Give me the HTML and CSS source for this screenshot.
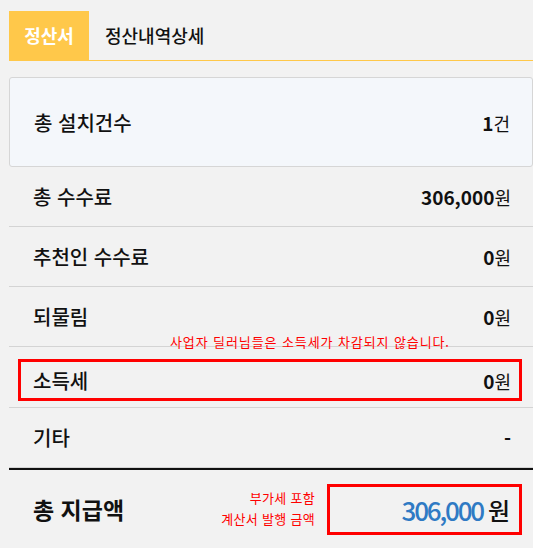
FILE: index.html
```html
<!DOCTYPE html>
<html lang="ko">
<head>
<meta charset="UTF-8">
<meta name="viewport" content="width=device-width, initial-scale=1.0">
<title>정산서</title>
<link rel="stylesheet" href="styles.css">
</head>
<body>
<div class="wrap">
    <div class="tabs">
        <div class="tab active">정산서</div>
        <div class="tab">정산내역상세</div>
    </div>

    <div class="card">
        <span class="label">총 설치건수</span>
        <span class="value"><b>1</b>건</span>
    </div>

    <div class="row">
        <span class="label">총 수수료</span>
        <span class="value"><b>306,000</b>원</span>
    </div>
    <div class="row">
        <span class="label">추천인 수수료</span>
        <span class="value"><b>0</b>원</span>
    </div>
    <div class="row">
        <span class="label">되물림</span>
        <span class="value"><b>0</b>원</span>
    </div>
    <div class="row tax-row">
        <p class="tax-note">사업자 딜러님들은 소득세가 차감되지 않습니다.</p>
        <div class="tax-box">
            <span class="label">소득세</span>
            <span class="value"><b>0</b>원</span>
        </div>
    </div>
    <div class="row">
        <span class="label">기타</span>
        <span class="value"><b>-</b></span>
    </div>

    <div class="total">
        <span class="total-label">총 지급액</span>
        <div class="total-right">
            <p class="total-note">부가세 포함<br>계산서 발행 금액</p>
            <div class="total-box">
                <span class="total-num">306,000</span> 원
            </div>
        </div>
    </div>
</div>
</body>
</html>
```

FILE: styles.css
```css
body {
    margin: 0;
    padding: 0;
    background-color: #f2f2f2;
    font-family: "Noto Sans CJK KR", "Noto Sans", sans-serif;
    color: #111111;
}
.wrap {
    padding: 11px 0 0 9px;
}

/* tabs */
.tabs {
    display: flex;
    border-bottom: 1px solid #ffc84a;
}
.tab {
    height: 49px;
    line-height: 49px;
    padding: 0 16px;
    font-size: 18px;
    font-weight: 500;
}
.tab.active {
    width: 80px;
    box-sizing: border-box;
    text-align: center;
    padding: 0;
    background-color: #ffc84a;
    color: #ffffff;
    font-weight: 700;
}

/* summary card */
.card {
    display: flex;
    justify-content: space-between;
    align-items: center;
    margin-top: 16px;
    height: 90px;
    box-sizing: border-box;
    padding: 0 22px 0 24px;
    background-color: #f4f7fb;
    border: 1px solid #d6d6d6;
    border-radius: 3px;
}

.label {
    font-size: 20px;
    font-weight: 500;
}
.value {
    font-size: 18px;
}
.value b {
    font-size: 19px;
    font-weight: 700;
}

/* rows */
.row {
    display: flex;
    justify-content: space-between;
    align-items: center;
    height: 59px;
    padding: 0 22px 0 24px;
    border-bottom: 1px solid #d4d4d4;
}
.tax-row {
    position: relative;
    box-sizing: border-box;
    height: 61px;
    padding: 12px 11px 6px 9px;
    align-items: stretch;
}
.tax-note {
    position: absolute;
    top: -14px;
    left: 161px;
    margin: 0;
    font-size: 13px;
    letter-spacing: 0.9px;
    color: #ff0000;
    line-height: 18px;
}
.tax-box {
    flex: 1;
    display: flex;
    justify-content: space-between;
    align-items: center;
    border: 3px solid #ff0000;
    padding: 0 8px 0 12px;
}

/* total */
.total {
    display: flex;
    justify-content: space-between;
    align-items: center;
    border-top: 2px solid #111111;
    height: 78px;
    padding: 0 11px 0 24px;
}
.total-label {
    font-size: 23px;
    font-weight: 700;
}
.total-right {
    display: flex;
    align-items: center;
    gap: 12px;
}
.total-note {
    margin: 0 0 2px;
    text-align: right;
    font-size: 13px;
    line-height: 21px;
    letter-spacing: 0.3px;
    color: #ff0000;
}
.total-box {
    width: 195px;
    height: 51px;
    box-sizing: border-box;
    border: 3px solid #ff0000;
    display: flex;
    justify-content: flex-end;
    align-items: center;
    gap: 5px;
    padding-right: 9px;
    font-size: 24px;
    font-weight: 500;
}
.total-num {
    color: #2f7ac4;
    font-size: 26px;
    letter-spacing: -2.2px;
}
```
